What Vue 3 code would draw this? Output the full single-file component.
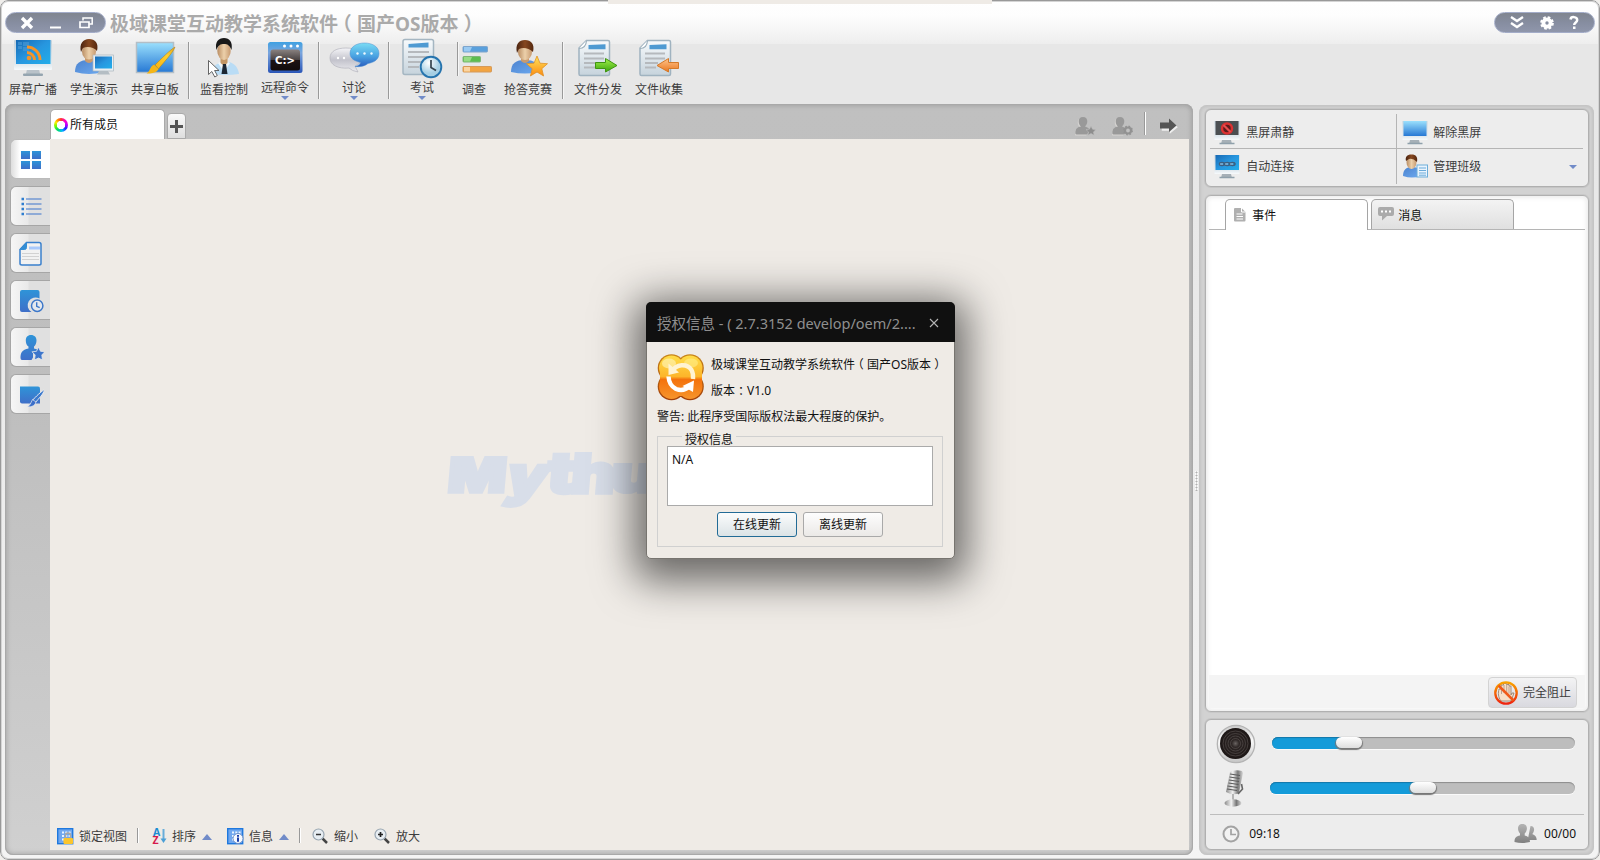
<script setup>
const tools = [
  { id: 'broadcast', label: '屏幕广播' },
  { id: 'student', label: '学生演示' },
  { id: 'board', label: '共享白板' },
  { sep: true },
  { id: 'control', label: '监看控制' },
  { id: 'command', label: '远程命令', more: true },
  { sep: true },
  { id: 'discuss', label: '讨论', more: true },
  { sep: true },
  { id: 'exam', label: '考试', more: true },
  { sep: true, short: true },
  { id: 'survey', label: '调查' },
  { id: 'quiz', label: '抢答竞赛' },
  { sep: true },
  { id: 'send', label: '文件分发' },
  { id: 'collect', label: '文件收集' },
]
const views = ['grid', 'list', 'report', 'history', 'group', 'draw']
const sliders = [
  { id: 'speaker', value: 25.4 },
  { id: 'mic', value: 50.2 },
]
</script>

<template>
  <svg class="defs" aria-hidden="true">
    <defs>
      <linearGradient id="screen" x1="0" y1="0" x2="1" y2="1"><stop offset="0" stop-color="#1769b4" /><stop offset=".5" stop-color="#2796df" /><stop offset="1" stop-color="#22aeea" /></linearGradient>
      <linearGradient id="sky" x1="0" y1="0" x2="0" y2="1"><stop offset="0" stop-color="#9be0fd" /><stop offset="1" stop-color="#2678d4" /></linearGradient>
      <linearGradient id="metal" x1="0" y1="0" x2="0" y2="1"><stop offset="0" stop-color="#c3d2dc" /><stop offset=".8" stop-color="#dfe8ee" /><stop offset="1" stop-color="#f7fafc" /></linearGradient>
      <linearGradient id="blue" x1="0" y1="0" x2="0" y2="1"><stop offset="0" stop-color="#2f94d8" /><stop offset="1" stop-color="#3f6fc8" /></linearGradient>
      <linearGradient id="cloth" x1="0" y1="0" x2="1" y2="1"><stop offset="0" stop-color="#4c83cf" /><stop offset="1" stop-color="#6daaf0" /></linearGradient>
      <linearGradient id="skin" x1="0" y1="0" x2="1" y2="0"><stop offset="0" stop-color="#b98d63" /><stop offset=".5" stop-color="#ecd0aa" /><stop offset="1" stop-color="#c79a70" /></linearGradient>
      <linearGradient id="hair" x1="0" y1="0" x2="1" y2="0"><stop offset="0" stop-color="#4a2310" /><stop offset=".5" stop-color="#86471f" /><stop offset="1" stop-color="#54280f" /></linearGradient>
      <linearGradient id="paper" x1="0" y1="0" x2="0" y2="1"><stop offset="0" stop-color="#f7fafc" /><stop offset="1" stop-color="#c6d3dc" /></linearGradient>
      <linearGradient id="gold" x1="0" y1="0" x2="0" y2="1"><stop offset="0" stop-color="#ffe45a" /><stop offset="1" stop-color="#fb8b12" /></linearGradient>
      <linearGradient id="brush" x1="0" y1="1" x2="1" y2="0"><stop offset="0" stop-color="#f6b00f" /><stop offset=".6" stop-color="#ffd02e" /><stop offset="1" stop-color="#e2a41b" /></linearGradient>
      <linearGradient id="greenArrow" x1="0" y1="0" x2="0" y2="1"><stop offset="0" stop-color="#a2f04c" /><stop offset="1" stop-color="#3da60d" /></linearGradient>
      <linearGradient id="orangeArrow" x1="0" y1="0" x2="0" y2="1"><stop offset="0" stop-color="#ffc48b" /><stop offset="1" stop-color="#e9771f" /></linearGradient>
      <linearGradient id="bubble" x1="0" y1="0" x2="0" y2="1"><stop offset="0" stop-color="#7adcf4" /><stop offset=".55" stop-color="#4aa3e2" /><stop offset="1" stop-color="#2a5fc0" /></linearGradient>
      <linearGradient id="bubbleGrey" x1="0" y1="0" x2="0" y2="1"><stop offset="0" stop-color="#f4f4f7" /><stop offset=".5" stop-color="#c3c3cc" /><stop offset="1" stop-color="#ececf0" /></linearGradient>
      <linearGradient id="prompt" x1="0" y1="0" x2="0" y2="1"><stop offset="0" stop-color="#8a8280" /><stop offset=".48" stop-color="#4a4444" /><stop offset=".5" stop-color="#1c1415" /><stop offset="1" stop-color="#120c0d" /></linearGradient>
      <linearGradient id="frame" x1="0" y1="0" x2="0" y2="1"><stop offset="0" stop-color="#3fa0e2" /><stop offset=".35" stop-color="#7ba5dd" /><stop offset="1" stop-color="#2a56b8" /></linearGradient>
      <linearGradient id="logo" gradientUnits="userSpaceOnUse" x1="0" y1="0" x2="0" y2="48"><stop offset="0" stop-color="#ffe04a" /><stop offset=".47" stop-color="#fdb52a" /><stop offset=".53" stop-color="#f4720c" /><stop offset="1" stop-color="#f79a30" /></linearGradient>
      <linearGradient id="rim" gradientUnits="userSpaceOnUse" x1="0" y1="0" x2="0" y2="48"><stop offset="0" stop-color="#c9861a" /><stop offset="1" stop-color="#a03c08" /></linearGradient>
      <linearGradient id="ban" x1="0" y1="0" x2="0" y2="1"><stop offset="0" stop-color="#f9a400" /><stop offset="1" stop-color="#ee2410" /></linearGradient>
      <linearGradient id="people" x1="0" y1="0" x2="0" y2="1"><stop offset="0" stop-color="#b4b4b4" /><stop offset="1" stop-color="#808080" /></linearGradient>
      <linearGradient id="chrome" x1="0" y1="0" x2="1" y2="0"><stop offset="0" stop-color="#8b8b8b" /><stop offset=".4" stop-color="#f2f2f2" /><stop offset=".7" stop-color="#777" /><stop offset="1" stop-color="#d8d8d8" /></linearGradient>
      <radialGradient id="cone"><stop offset="0" stop-color="#6a6462" /><stop offset=".25" stop-color="#2d2625" /><stop offset="1" stop-color="#1d1716" /></radialGradient>
      <linearGradient id="ring" x1="0" y1="0" x2="0" y2="1"><stop offset="0" stop-color="#c9c9c9" /><stop offset=".4" stop-color="#fafafa" /><stop offset="1" stop-color="#c4c4c4" /></linearGradient>
      <radialGradient id="dial" cx=".4" cy=".3"><stop offset="0" stop-color="#ffffff" /><stop offset="1" stop-color="#a6cfe4" /></radialGradient>
    </defs>

    <symbol id="broadcast" viewBox="0 0 56 42">
      <path d="M22 31h12l1 5h-14z" fill="#b9c2c9" /><rect x="18" y="35.5" width="20" height="2.5" rx="1" fill="#95a5b0" />
      <rect x="9" y="2" width="38" height="30" rx="1" fill="url(#metal)" /><rect x="11" y="2" width="34.500" height="24" fill="url(#screen)" />
      <path d="M13 4h4v3h-4zM18 4h6v4h-6zM13 8h4v3h-4zM18 9h6v4h-6z" fill="#4d9bd6" opacity=".6" />
      <circle cx="24" cy="20" r="2.300" fill="#f59428" /><path d="M22 14.500a7.500 7.500 0 0 1 7.500 7.500M22 9a13 13 0 0 1 13 13" fill="none" stroke="#f59428" stroke-width="3" />
    </symbol>
    <symbol id="student" viewBox="0 0 56 42">
      <path d="M9 34c0-9 5-12 14-12s13 3 14 12q-14 4-28 0z" fill="url(#cloth)" /><path d="M19 18h8v5q-4 4-8 0z" fill="#c99b6f" />
      <ellipse cx="23" cy="13.500" rx="7" ry="8" fill="url(#skin)" /><path d="M15 14c-2-8 2-13 8-13s10 4 8 12c-3-4-10-5-14-3z" fill="url(#hair)" />
      <rect x="27" y="17" width="20.500" height="16" fill="#e9eef1" stroke="#aab6bd" stroke-width=".7" /><rect x="29" y="18.500" width="17" height="12" fill="url(#screen)" /><path d="M33 33h9l2 3.500h-13z" fill="#b4bdc3" />
    </symbol>
    <symbol id="board" viewBox="0 0 56 42">
      <rect x="9.500" y="4.500" width="37" height="30" fill="url(#sky)" stroke="#b3bec6" stroke-width="1.500" />
      <path d="M48 9c-4 2-15 13-20 18l3.500 4C36 25 46 15 48 9z" fill="url(#brush)" stroke="#ad7e12" stroke-width=".5" /><path d="M27 26.500l4.500 4.500c-2 4-8 5-12 4.500 4-2 3-7 7.500-9z" fill="#f4b517" />
    </symbol>
    <symbol id="control" viewBox="0 0 56 42">
      <path d="M16 36c0-8 4-11 12-12s14 4 15 12q-14 2-27 0z" fill="#b9dcf5" /><path d="M22 25l6 9 6-9-6-3z" fill="#eef6fc" /><path d="M24.500 19h7v6l-3.500 3-3.500-3z" fill="#c39766" />
      <path d="M27 26h3l1.500 10h-6z" fill="#1b2734" /><ellipse cx="28" cy="13" rx="6.700" ry="9" fill="url(#skin)" /><path d="M20.500 12c-2-8 2-12 7.500-12s9 4 7.500 12c-2-5-4-6-7.500-6s-6 1-7.500 6z" fill="#191919" />
      <path d="M12.500 22.500v14l3.300-3 3 5.500 2.500-1.500-2.700-5h4.400z" fill="#fff" stroke="#555" stroke-width=".9" />
    </symbol>
    <symbol id="command" viewBox="0 0 56 42">
      <rect x="11" y="4" width="34.500" height="31" rx="2.500" fill="url(#frame)" /><rect x="13.500" y="11.500" width="29.500" height="21" rx="2.500" fill="url(#prompt)" />
      <circle cx="27.500" cy="8" r="1.500" fill="#fff" /><circle cx="34" cy="8" r="1.500" fill="#fff" /><circle cx="40.500" cy="8" r="1.500" fill="#fff" />
      <text x="18" y="25.500" font-family="DejaVu Sans" font-size="10" font-weight="bold" fill="#fff" textLength="20" lengthAdjust="spacingAndGlyphs">C:&gt;</text>
    </symbol>
    <symbol id="discuss" viewBox="0 0 56 42">
      <path d="M20 10c10 0 16 4 16 10 0 3-3 6-7 8l3 6q-6-1-9-4C12 31 4 27 4 20S11 10 20 10z" fill="url(#bubbleGrey)" stroke="#b3b3bc" stroke-width=".7" />
      <g fill="#fff"><circle cx="12" cy="20" r="1.200" /><circle cx="18" cy="20" r="1.200" /></g>
      <path d="M38.500 5C46 5 53 8.500 53 15.500c0 6-5 9-11 10q-5 4-13 3 5-1 5.500-4C28 23 24 20 24 15.500 24 8.500 31 5 38.500 5z" fill="url(#bubble)" stroke="#4b8ed0" stroke-width=".5" />
      <g fill="#eef9ff"><circle cx="31.500" cy="15.500" r="1.200" /><circle cx="38.500" cy="15.500" r="1.200" /><circle cx="45.500" cy="15.500" r="1.200" /></g>
    </symbol>
    <symbol id="exam" viewBox="0 0 56 42">
      <rect x="9" y="1.500" width="30.500" height="35" rx="2" fill="url(#paper)" stroke="#a5b6c2" stroke-width="1.500" /><path d="M14.500 6l20-1.500v5h-20z" fill="#4e9ad2" />
      <path d="M14 14h21M14 19h21M14 24h14M14 29h11" stroke="#b5b9bd" stroke-width="1.800" /><circle cx="37" cy="29" r="10.300" fill="url(#dial)" stroke="#2674ae" stroke-width="1.900" /><path d="M37 22v7.500l5 3" fill="none" stroke="#34434e" stroke-width="1.700" />
    </symbol>
    <symbol id="survey" viewBox="0 0 56 42">
      <rect x="17" y="8.500" width="24.500" height="5.500" rx=".8" fill="#5aa0dc" stroke="#7fa5cc" /><path d="M18 9h8l-2 4.500h-6z" fill="#9acaf2" />
      <rect x="17" y="18.500" width="17.500" height="5.500" rx=".8" fill="#5cbd4e" stroke="#7fb578" /><path d="M18 19h8l-2 4.500h-6z" fill="#97dc85" />
      <rect x="17" y="28.500" width="28.500" height="5.500" rx=".8" fill="#f2a441" stroke="#d59a5a" /><path d="M18 29h6v4.500h-6z" fill="#fbd4a0" />
    </symbol>
    <symbol id="quiz" viewBox="0 0 56 42">
      <path d="M11 34c0-9 5-12 14-12s14 3 14 12q-14 3-28 0z" fill="url(#cloth)" /><path d="M21 18h8v5q-4 4-8 0z" fill="#c99b6f" /><ellipse cx="25" cy="14" rx="7" ry="8" fill="url(#skin)" /><path d="M17 15c-2-9 2-13 8-13s10 4 8 12c-4-4-10-5-14-3z" fill="url(#hair)" />
      <path d="M37 18l3 7.200 7.500.5-5.700 5 1.800 7.300-6.600-4-6.600 4 1.800-7.300-5.700-5 7.500-.5z" fill="url(#gold)" stroke="#e09227" stroke-width=".8" />
    </symbol>
    <symbol id="sheet" viewBox="0 0 56 42">
      <path d="M16.500 2.500h21.500q1.500 0 1.500 1.500v32q0 1.500-1.500 1.500h-27.500q-1.500 0-1.500-1.500v-26z" fill="url(#paper)" stroke="#a0b3c0" stroke-width="1.500" /><path d="M9 10.500q7 0 7.500-8" fill="#fff" stroke="#9cafbc" stroke-width="1.200" />
      <path d="M18.500 7l17-.8v5h-17z" fill="#4e9ad2" /><path d="M14 15.500h20M14 20.500h20M14 25h13M14 29.500h11" stroke="#b5b9bd" stroke-width="1.800" />
    </symbol>
    <symbol id="send" viewBox="0 0 56 42"><use href="#sheet" width="56" height="42" /><path d="M25.500 24.500h10v-4l11.500 7-11.500 6.500v-3.500h-10z" fill="url(#greenArrow)" stroke="#3f9512" stroke-width="1" /></symbol>
    <symbol id="collect" viewBox="0 0 56 42"><use href="#sheet" width="56" height="42" /><path d="M47.500 24.500h-10v-4l-11.500 7 11.500 6.500v-3.500h10z" fill="url(#orangeArrow)" stroke="#d47929" stroke-width="1" /></symbol>

    <symbol id="grid" viewBox="0 0 26 26"><path d="M3 4h9v8H3zM14 4h9v8h-9z" fill="url(#blue)" /><path d="M3 14h9v8H3zM14 14h9v8h-9z" fill="url(#blue)" /></symbol>
    <symbol id="list" viewBox="0 0 26 26"><path d="M3.500 5h2.500M3.500 10h2.500M3.500 15h2.500M3.500 20h2.500" stroke="#2f7ed0" stroke-width="2.400" /><path d="M8 5h15.500M8 10h15.500M8 15h15.500M8 20h15.500" stroke="#3c74cc" stroke-width="1.200" /></symbol>
    <symbol id="report" viewBox="0 0 26 26"><path d="M8.500 1.500h12.500q2 0 2 2v19q0 1.500-2 1.500H4q-2 0-2-1.500V8.500z" fill="#f2f2f2" stroke="#3a80cd" stroke-width="1.500" /><path d="M2 8.500l6.500-7v5q0 2-2 2z" fill="#338dd4" stroke="#338dd4" /><path d="M11 5.500h11v3H11z" fill="#a9c9fb" /><path d="M4 12.500h17M4 15.500h17M4 18.500h17" stroke="#d2d2d2" /></symbol>
    <symbol id="history" viewBox="0 0 26 26"><path d="M4 2h15.500q2 0 2 2v6.500a7.300 7.300 0 0 0-8 13.500H4q-2 0-2-2V4q0-2 2-2z" fill="url(#blue)" /><circle cx="19.200" cy="17.700" r="5.700" fill="#e4e8ee" stroke="#3c77c9" stroke-width="1.500" /><path d="M18.700 14.300v4l3 1.400" fill="none" stroke="#3c77c9" stroke-width="1.400" /></symbol>
    <symbol id="group" viewBox="0 0 26 26"><path d="M13 0c3.500 0 5.500 2.300 5.500 5.500 0 2.500-1 5-2.500 6v2q4 .5 6 3l-7 1v5l-1.500 2.500H4q-1.500 0-1.500-2c0-5 1.500-8.500 8-9.500v-2c-2-1-2.700-3.500-2.700-6C7.800 2.300 9.500 0 13 0z" fill="url(#blue)" /><path d="M20.500 12l2 4.300 4.300.5-3 3.200.6 5-3.900-2-4 2 .7-5-3.200-3.200 4.500-.5z" fill="#3c75cb" stroke="#e4e8ee" stroke-width=".8" /></symbol>
    <symbol id="draw" viewBox="0 0 26 26"><path d="M2 4.500h18q2 0 2 2v15H4q-2 0-2-2z" fill="url(#blue)" /><path d="M26.500 7.500c-2 1-10 8-12 11l3 2c3-4 8-8 9-13z" fill="#3b79cd" stroke="#e9ebef" /><path d="M14.500 17.500l3.500 2.500q-1 5-8.500 5 3-2 5-7.500z" fill="#3c6fc9" stroke="#e9ebef" stroke-width=".7" /></symbol>

    <symbol id="monitor" viewBox="0 0 26 26"><path d="M8 20h9l1 4H7z" fill="#a6b0b7" /><path d="M5.500 23.500h15" stroke="#8fa0ab" stroke-width="1.500" /><rect x=".5" y="1" width="25" height="19" rx=".5" fill="url(#metal)" /></symbol>
    <symbol id="black" viewBox="0 0 26 26"><use href="#monitor" width="26" height="26" /><rect x="1.500" y="1" width="23" height="14" fill="#4b4f52" /><circle cx="13" cy="8.500" r="5" fill="#5f1b1c" stroke="#db3232" stroke-width="2.500" /><path d="M9.500 5l7 7" stroke="#e84e4e" stroke-width="2.200" /></symbol>
    <symbol id="unblack" viewBox="0 0 26 26"><use href="#monitor" width="26" height="26" /><rect x="1.500" y="1" width="23" height="15" fill="url(#sky)" /></symbol>
    <symbol id="connect" viewBox="0 0 26 26"><use href="#monitor" width="26" height="26" /><rect x="1.500" y="1" width="23.500" height="15" fill="url(#screen)" /><g fill="none" stroke="#3e5f80" stroke-width="1.500"><ellipse cx="8" cy="10" rx="2.500" ry="1.500" /><ellipse cx="13.300" cy="10" rx="2.500" ry="1.500" /><ellipse cx="18.500" cy="10" rx="2.500" ry="1.500" /></g><path d="M6 10h15" stroke="#cfe0ec" stroke-width=".8" stroke-dasharray="3 2" /></symbol>
    <symbol id="class" viewBox="0 0 26 26"><path d="M1 22c0-6 3-9 9-9s9 3 9 9q-9 3-18 0z" fill="url(#cloth)" /><ellipse cx="9.500" cy="8" rx="5" ry="7" fill="url(#skin)" /><path d="M4 7C3 3 5 .5 9.500.5S16 3 15 8q-4-4-8-3z" fill="url(#hair)" /><rect x="15" y="11" width="10.500" height="12" fill="#eaf4fd" stroke="#6cadd9" /><path d="M17 14h7M17 16.500h7M17 19h7M17 21.200h7" stroke="#6babda" /></symbol>

    <symbol id="person" viewBox="0 0 22 20"><path d="M8 0c3 0 4.300 2 4.300 4.300S11.300 8.500 10 9.500q4 1 5 4l-3 4H1.500Q0 17.500.3 15C.6 11.500 3 10 6 9.500 4.500 8.500 3.700 6.600 3.700 4.300S5 0 8 0z" fill="#d5d3d1" transform="translate(-.9 .9)" /><path d="M8 0c3 0 4.300 2 4.300 4.300S11.300 8.500 10 9.500q4 1 5 4l-3 4H1.500Q0 17.500.3 15C.6 11.500 3 10 6 9.500 4.500 8.500 3.700 6.600 3.700 4.300S5 0 8 0z" fill="#999" /></symbol>
    <symbol id="lens" viewBox="0 0 17 17"><path d="M10.500 10.500l4.500 4.500" stroke="#444" stroke-width="2.500" /><circle cx="6.500" cy="6.500" r="5.500" fill="#e7edf2" stroke="#98a5b1" stroke-width="1.200" /></symbol>
    <symbol id="panel" viewBox="0 0 17 17"><rect x=".7" y=".7" width="15" height="15" fill="#70a7ef" stroke="#1e78de" stroke-width="1.400" /><path d="M5 4.500h9M5 8h9M5 11.500h9" stroke="#e8f3ff" stroke-width="2" stroke-dasharray="2 1.300" /></symbol>

    <symbol id="speaker" viewBox="0 0 42 40"><circle cx="20" cy="20" r="18.700" fill="url(#ring)" stroke="#b4b4b4" stroke-width="1.300" /><circle cx="19.500" cy="19.500" r="15.500" fill="url(#cone)" /><g fill="none" stroke="#5d5654" stroke-width=".6"><circle cx="19.500" cy="19.500" r="12.500" /><circle cx="19.500" cy="19.500" r="10" /><circle cx="19.500" cy="19.500" r="7.500" /><circle cx="19.500" cy="19.500" r="5" /></g></symbol>
    <symbol id="mic" viewBox="0 0 42 40"><path d="M15 3q5-3 12-1l1 2-4 20q-6 3-13-1z" fill="url(#chrome)" /><path d="M15 5l10 1.500M14.500 8l10 1.500M14 11l10 1.500M13.500 14l10 1.500M12.500 17l10 1.500M12 20l10 1.500" stroke="#5c5c5c" stroke-width="1.200" /><path d="M26.500 15l1 5-4.500 5" fill="none" stroke="#666" stroke-width="1.600" /><path d="M17 25v7h2v-7z" fill="#b5b5b5" /><ellipse cx="18" cy="34" rx="8.500" ry="3.700" fill="url(#chrome)" /></symbol>
  </svg>

  <div class="window">
    <div class="strip"></div>
    <header class="titlebar">
      <div class="capsule">
        <svg class="close" width="14" height="12" viewBox="0 0 14 12"><path d="M2 1l10 10M12 1L2 11" stroke="#fff" stroke-width="3.400" /></svg>
        <svg class="min" width="11" height="12" viewBox="0 0 11 12"><path d="M0 10.500h11" stroke="#fff" stroke-width="2.200" /></svg>
        <svg class="restore" width="14" height="12" viewBox="0 0 14 12"><path d="M4 3.500v-2.500h9.200v6h-3" fill="none" stroke="#fff" stroke-width="1.500" /><path d="M1 5h9v5.500H1z" fill="none" stroke="#fff" stroke-width="1.700" /></svg>
      </div>
      <h1>极域课堂互动教学系统软件<span class="paren">（</span>国产OS版本<span class="paren shut">）</span></h1>
      <div class="capsule right">
        <svg width="14" height="13" viewBox="0 0 14 13"><path d="M1 1l6 4 6-4M1 7l6 4 6-4" fill="none" stroke="#fff" stroke-width="2.300" /></svg>
        <svg width="14" height="14" viewBox="0 0 14 14"><circle cx="7" cy="7" r="3.600" fill="none" stroke="#fff" stroke-width="3.800" /><circle cx="7" cy="7" r="5.700" fill="none" stroke="#fff" stroke-width="2.300" stroke-dasharray="2.577 1.900" /></svg>
        <svg width="10" height="13" viewBox="0 0 10 13"><path d="M1.500 3.500C2 0 8.200.5 8.200 4c0 2.400-3 2.500-3 5" fill="none" stroke="#fff" stroke-width="2.500" /><path d="M4 10.500h2.500V13H4z" fill="#fff" /></svg>
      </div>
    </header>

    <nav class="toolbar">
      <template v-for="(t, i) in tools" :key="i">
        <i v-if="t.sep" class="sep" :class="{ short: t.short }"></i>
        <div v-else class="tool" :class="[t.id, { more: t.more }]">
          <svg width="56" height="42"><use :href="'#' + t.id" width="56" height="42" /></svg>
          <span>{{ t.label }}</span>
          <b v-if="t.more"></b>
        </div>
      </template>
    </nav>

    <div class="body">
      <main class="stage">
        <div class="tabs">
          <div class="tab"><i class="wheel"></i>所有成员</div>
          <div class="plus"><svg width="13" height="13" viewBox="0 0 13 13"><path d="M6.500 0v13M0 6.500h13" stroke="#555" stroke-width="3" /></svg></div>
          <div class="actions">
            <svg width="22" height="20"><use href="#person" width="22" height="20" /><path d="M16 9l1.600 3.200 3.400.4-2.500 2.300.7 3.400-3.200-1.700-3.200 1.700.7-3.400-2.500-2.300 3.400-.4z" fill="#8e8e8e" stroke="#c0c0c0" stroke-width=".6" /></svg>
            <svg width="22" height="20"><use href="#person" width="22" height="20" /><circle cx="16" cy="13.500" r="3" fill="#c0c0c0" stroke="#929292" stroke-width="2.200" /><circle cx="16" cy="13.500" r="4.300" fill="none" stroke="#929292" stroke-width="1.300" stroke-dasharray="1.690 1.690" /></svg>
            <i class="rule"></i>
            <svg width="18" height="16" viewBox="0 0 18 16"><path d="M1 5h8V1.500l8 7L9 15v-3H1z" fill="#eee" transform="translate(.8 .8)" /><path d="M0 4.500h9V.5l7.500 7L9 14v-3.500H0z" fill="#555" /></svg>
          </div>
        </div>
        <div class="work">
          <aside class="rail">
            <div v-for="(v, i) in views" :key="v" class="view" :class="{ on: i === 0 }"><svg width="26" height="26"><use :href="'#' + v" width="26" height="26" /></svg></div>
          </aside>
          <section class="canvas">
            <svg class="mark" width="200" height="80" viewBox="0 0 200 80">
              <g transform="translate(4.500 0) skewX(-5)" font-family="Inter" font-weight="900" fill="#d8dee9" stroke="#d8dee9" stroke-width="3.500">
                <text y="51.500" x="1" font-size="47" textLength="58" lengthAdjust="spacingAndGlyphs">M</text>
                <text y="54" x="60" font-size="54" font-style="italic" textLength="41" lengthAdjust="spacingAndGlyphs">y</text>
                <text y="51.500" x="100" font-size="57" textLength="27" lengthAdjust="spacingAndGlyphs">t</text>
                <text y="51.500" x="124" font-size="54" textLength="44" lengthAdjust="spacingAndGlyphs">h</text>
                <text y="51.500" x="164" font-size="50" textLength="46" lengthAdjust="spacingAndGlyphs">u</text>
              </g>
            </svg>
            <footer class="status">
              <div class="st lock"><svg width="17" height="17"><use href="#panel" width="17" height="17" /><path d="M8.500 11V7.500a2.500 2.500 0 0 1 5 0V11" fill="none" stroke="#a7a7a7" stroke-width="1.600" /><rect x="6.500" y="10" width="9.500" height="6" rx="1" fill="#fbc52c" /></svg>锁定视图</div>
              <i class="mini"></i>
              <div class="st sort"><svg width="15" height="17"><text x="1" y="7.500" font-family="Noto Sans" font-weight="bold" font-size="10.500" fill="#1c8bd2">A</text><text x="0.500" y="16" font-family="Noto Sans" font-weight="bold" font-size="10.500" fill="#d61a4c">Z</text><path d="M11.500 1v11" stroke="#68add9" stroke-width="2" /><path d="M8.500 10.500h6L11.500 15z" fill="#4b9fd6" /></svg>排序<b></b></div>
              <div class="st info"><svg width="17" height="17"><use href="#panel" width="17" height="17" /><circle cx="11" cy="10.500" r="5" fill="#f5f9ff" stroke="#6d8ec7" /><path d="M11 7v1.700M11 9.600v4.200" stroke="#1a3eaa" stroke-width="2" /></svg>信息<b></b></div>
              <i class="mini"></i>
              <div class="st out"><svg width="17" height="17"><use href="#lens" width="17" height="17" /><path d="M4 6.500h5" stroke="#333" stroke-width="1.500" /></svg>缩小</div>
              <div class="st in"><svg width="17" height="17"><use href="#lens" width="17" height="17" /><path d="M4 6.500h5M6.500 4v5" stroke="#222" stroke-width="1.700" /></svg>放大</div>
            </footer>
          </section>
        </div>
      </main>
      <div class="grip"></div>
      <aside class="side">
        <div class="box quick">
          <div class="q"><svg width="26" height="26"><use href="#black" width="26" height="26" /></svg>黑屏肃静</div>
          <div class="q"><svg width="26" height="26"><use href="#unblack" width="26" height="26" /></svg>解除黑屏</div>
          <div class="q"><svg width="26" height="26"><use href="#connect" width="26" height="26" /></svg>自动连接</div>
          <div class="q"><svg width="26" height="26"><use href="#class" width="26" height="26" /></svg>管理班级<b></b></div>
        </div>
        <div class="box feed">
          <div class="feedtabs">
            <div class="ft on"><svg width="12" height="14" viewBox="0 0 12 14"><path d="M1 0h6.500l4 4v8.500q0 1-1 1H1q-1 0-1-1V1q0-1 1-1z" fill="#b0b0b0" /><path d="M7.500 0v4h4M2.500 6h6M2.500 8.500h6.500M2.500 11h6.500" stroke="#fff" fill="none" /></svg>事件</div>
            <div class="ft"><svg width="16" height="14" viewBox="0 0 16 14"><path d="M2 0h12q2 0 2 2v5q0 2-2 2H9l-5 4.500V9H2Q0 9 0 7V2q0-2 2-2z" fill="#ababab" /><path d="M3 4.500h2M7 4.500h2M11 4.500h2" stroke="#fff" stroke-width="2" /></svg>消息</div>
          </div>
          <div class="events"></div>
          <div class="block">
            <button><svg width="24" height="24" viewBox="0 0 24 24"><path d="M7 20c-3-4-3-8-2-12h2V4h2.500V2.500h3V3.500h2.500V5h2v9l1-2h2l-3 8z" fill="#f7dfc8" stroke="#8e7766" stroke-width=".8" /><path d="M7.500 6v7M10 4v8M12.700 4v8M15 5.500v7" stroke="#a08a7b" stroke-width=".7" /><circle cx="12" cy="12" r="10.700" fill="none" stroke="url(#ban)" stroke-width="2.300" /><path d="M4.500 4.500l15 15" stroke="#f05a1a" stroke-width="2.500" /></svg>完全阻止</button>
          </div>
        </div>
        <div class="box sound">
          <div v-for="s in sliders" :key="s.id" class="row" :class="s.id">
            <svg width="42" height="40"><use :href="'#' + s.id" width="42" height="40" /></svg>
            <div class="track"><div class="fill" :style="{ width: s.value + '%' }"><i class="knob"></i></div></div>
          </div>
          <div class="info-row">
            <svg width="18" height="18" viewBox="0 0 18 18"><circle cx="9" cy="9" r="7.500" fill="#f2f2f2" stroke="#a3a3a3" stroke-width="2" /><path d="M9 4v5.500h5" fill="none" stroke="#a3a3a3" stroke-width="1.700" /></svg>
            <span>09:18</span>
            <svg class="folk" width="24" height="20" viewBox="0 0 24 20"><path d="M16.500 2c5 0 4 6 1.700 8 3 1 4.500 3 4.500 6h-9zM8.500 0c6 0 5 7 2.200 9.500v2q5.300 1 5.300 6.500-8 2-15.500 0c0-4 1.500-6 5.500-6.500v-2C3.500 7 2.500 0 8.500 0z" fill="url(#people)" /></svg>
            <span>00/00</span>
          </div>
        </div>
      </aside>
    </div>

    <div class="dialog">
      <div class="dtitle"><span>授权信息 - ( 2.7.3152 develop/oem/2....</span><svg width="10" height="10" viewBox="0 0 10 10"><path d="M1 1l8 8M9 1L1 9" stroke="#b5b5b5" stroke-width="1.100" /></svg></div>
      <div class="dbody">
        <div class="about">
          <svg width="48" height="48" viewBox="0 0 48 48">
            <g fill="url(#rim)"><circle cx="14.500" cy="14" r="13.800" /><circle cx="33" cy="14" r="13.800" /><circle cx="14.500" cy="32.500" r="13.800" /><circle cx="33" cy="32.500" r="13.800" /></g>
            <g fill="url(#logo)"><circle cx="14.500" cy="14" r="12.500" /><circle cx="33" cy="14" r="12.500" /><circle cx="14.500" cy="32.500" r="12.500" /><circle cx="33" cy="32.500" r="12.500" /><path d="M12 6h24v36H12z" /><path d="M3 13h42v22H3z" /></g>
            <ellipse cx="12" cy="9.500" rx="7" ry="5" fill="#fff6c0" opacity=".6" /><ellipse cx="34" cy="9" rx="7" ry="4.500" fill="#fff39a" opacity=".5" />
            <path d="M15 17.500C19 10 30 9 34.500 16q2 3.500 1.500 9" fill="none" stroke="#fff3d2" stroke-width="4.400" /><path d="M11.500 9.500v11.500l10.500-2.500z" fill="#fff3d2" />
            <path d="M11.500 22.500q.5 9 7.500 12.500 8 3 13.500-3" fill="none" stroke="#fff" stroke-width="4.400" /><path d="M37 26.500l-1 11.500-10.500-6z" fill="#fff" />
          </svg>
          <div class="names"><p>极域课堂互动教学系统软件<span class="paren">（</span>国产OS版本<span class="paren shut">）</span></p><p>版本<span class="colon">：</span>V1.0</p></div>
        </div>
        <p class="warn">警告: 此程序受国际版权法最大程度的保护。</p>
        <div class="group">
          <div class="legend">授权信息</div>
          <div class="text">N/A</div>
          <div class="buttons"><button class="primary">在线更新</button><button>离线更新</button></div>
        </div>
      </div>
    </div>
  </div>
</template>

<style>
body { background: #f0eeeb; overflow: hidden; }
</style>

<style scoped>
* { box-sizing: border-box; margin: 0; }
.defs { position: absolute; width: 0; height: 0; }
svg { display: block; flex: none; overflow: visible; }
.window { position: relative; width: 1600px; height: 860px; padding: 1px; border-radius: 8px; background: linear-gradient(#e7e7e7 100px, #e9e9e9 300px, #f4f4f4); overflow: hidden; font: 12px/16px "Noto Sans", "Noto Sans CJK SC", sans-serif; color: #3c3c3c; }
.window::after { content: ""; position: absolute; inset: 0; z-index: 2; border: 1px solid #999; border-radius: 8px; box-shadow: inset 0 0 0 1px #d4d4d4; pointer-events: none; }
.strip { position: absolute; z-index: 3; left: 608px; top: 0; width: 384px; height: 4px; background: #efebe6; }
.titlebar { height: 43px; padding: 11px 4px 0 4px; display: flex; background: linear-gradient(#fff, #fdfdfd 35%, #eee); }
.capsule { width: 101px; height: 21px; border-radius: 11px; border: 1px solid #a3acc8; background: linear-gradient(#80858f, #868da0 50%, #8f96ab); display: flex; align-items: center; }
.close { margin-left: 14px; }
.min { margin-left: 16px; }
.restore { margin-left: 18px; }
.capsule.right { margin-left: auto; padding: 0 15px 0 15px; justify-content: space-between; }
h1 { font-size: 19px; line-height: 28px; height: 28px; margin: -2px 0 0 4px; color: #aaa; white-space: nowrap; }
.paren { font-feature-settings: "halt" 1; margin: 0 .28em 0 .22em; }
.paren.shut { margin: 0 .22em 0 .28em; }
.colon { font-feature-settings: "halt" 1; margin: 0 .25em; }
.toolbar { height: 60px; display: grid; padding-left: 1px; margin-top: -6px; grid-template-columns: 62px 60px 62px 6px 64px 62px 2px 68px 2px 64px 8px 34px 64px 6px 64px 58px; justify-items: center; position: relative; }
.sep { width: 2px; height: 57px; margin-top: 4px; background: linear-gradient(90deg, #999 50%, #f6f6f6 50%); }
.sep.short { height: 34px; }
.tool { width: 60px; display: flex; flex-direction: column; align-items: center; white-space: nowrap; }
.tool span { margin-top: 2px; }
.tool.more span { margin-top: 0; }
.tool.survey { width: 24px; justify-self: start; }
.tool b { border: 4px solid transparent; border-top: 4px solid #718bc8; border-bottom: 0; }
.command { position: relative; left: -2px; }
.body { display: flex; height: 751px; margin: 6px 5px 0 4px; }
.stage { width: 1189px; border-radius: 8px; background: linear-gradient(#c0c0c0, #bebebe 40%, #d0d0d0); box-shadow: inset 0 0 0 1px #a9a9a9, inset 0 0 4px 2px rgba(130,130,130,.45); padding: 5px 4px 5px 5px; display: flex; flex-direction: column; }
.tabs { height: 30px; display: flex; padding-left: 40px; }
.tab { width: 115px; height: 30px; background: #fff; border: 1px solid #aaa; border-bottom: 0; border-radius: 5px 5px 0 0; display: flex; align-items: center; color: #111; padding: 0 0 0 3px; }
.wheel { width: 14px; height: 14px; border-radius: 50%; margin-right: 2px; background: radial-gradient(circle, #fff 4px, transparent 4.500px), conic-gradient(#f33, #f0c 12%, #b0f 25%, #22f 35%, #0bf 47%, #0d6 60%, #7f0 72%, #fe0 83%, #f80 92%, #f33); }
.plus { width: 19px; height: 26px; margin: 4px 0 0 2px; border: 1px solid #aaa; border-radius: 4px 4px 0 0; background: linear-gradient(#fafafa, #dedede); display: flex; align-items: center; justify-content: center; }
.actions { margin-left: auto; display: flex; padding-top: 8px; }
.actions svg { margin-right: 15px; }
.rule { width: 2px; height: 23px; background: linear-gradient(90deg, #999 50%, #fff 50%); margin: -5px 14px 0 -5px; }
.actions svg:last-child { margin: 1px 11px 0 0; }
.work { flex: 1; display: flex; min-height: 0; }
.rail { width: 40px; display: flex; flex-direction: column; gap: 7px; }
.view { height: 40px; border: 1px solid #a6a6a6; border-right: 0; border-radius: 6px 0 0 6px; background: linear-gradient(90deg, #f6f6f6, #e9e9e9 17px, #e0e0e0 18px); padding: 7px 0 0 7px; }
.view.on { background: linear-gradient(90deg, #ddd, #fff 9px); border-color: #bbb; }
.canvas { flex: 1; background: #efebe6; display: flex; flex-direction: column; justify-content: flex-end; position: relative; }
.mark { position: absolute; left: 396px; top: 302px; }
.status { display: flex; height: 27px; padding-left: 7px; align-items: center; }
.st { display: flex; align-items: center; height: 20px; }
.st svg { margin: -1px 5px 0 0; }
.st b { border: 5px solid transparent; border-bottom: 6px solid #718bc8; border-top: 0; margin-left: 6px; }
.mini { width: 2px; height: 15px; margin: -2px 0 0 10px; background: linear-gradient(90deg, #999 50%, #fff 50%); }
.sort { margin-left: 13px; }
.info { margin-left: 15px; }
.out { margin-left: 11px; }
.in { margin-left: 16px; }
.out svg, .in svg { margin-right: 5px; }
.grip { width: 6px; margin-top: 367px; height: 20px; padding: 0 1px 0 2px; background: radial-gradient(circle, #b0b0b0 .8px, #fafafa 1.200px) center 0 / 3px 3px content-box; }
.side { width: 395px; height: 750px; margin-top: 1px; border-radius: 8px; background: #d2d2d2; box-shadow: inset 0 0 3px 2px #c3c3c3; padding: 4px 5px 5px 6px; display: flex; flex-direction: column; }
.box { border: 1px solid #b0b0b0; border-radius: 6px; background: #ededed; box-shadow: 0 0 0 1px #c5c5c5; }
.quick { height: 78px; display: grid; grid-template-columns: 187px 186px; grid-template-rows: 35px 35px; padding: 4px 4px; }
.q { display: flex; align-items: center; padding: 1px 0 0 4px; }
.q:nth-child(odd) { border-right: 1px solid #b5b5b5; }
.q:nth-child(-n+2) { border-bottom: 1px solid #b5b5b5; padding-top: 3px; }
.q svg { margin-right: 6px; }
.q:nth-child(even) { padding-left: 5px; }
.q:nth-child(even) svg { margin-right: 5px; }
.q b { margin-left: auto; margin-right: 6px; border: 4px solid transparent; border-top-color: #718bc8; border-bottom: 0; }
.feed { height: 517px; margin-top: 8px; background: #fff; padding: 4px 3px 3px 3px; display: flex; flex-direction: column; box-shadow: 0 0 0 1px #c8c8c8, inset 0 0 4px 2px #ededed; }
.feedtabs { height: 31px; display: flex; gap: 3px; padding-left: 16px; border-bottom: 1px solid #b5b5b5; margin-top: -1px; }
.ft { width: 143px; height: 30px; border: 1px solid #a5a5a5; border-bottom: 0; border-radius: 5px 5px 0 0; display: flex; align-items: center; color: #111; background: linear-gradient(#f3f3f3, #e0e0e0); padding: 2px 0 0 6px; }
.ft svg { margin: -3px 4px 0 0; }
.ft.on { background: #fff; height: 31px; padding-left: 8px; }
.ft.on svg { margin-right: 6px; }
.events { flex: 1; }
.block { height: 33px; background: #f4f4f4; display: flex; justify-content: flex-end; padding: 2px 8px 0 0; }
button { font: inherit; color: #3c3c3c; padding: 0; }
.block button { width: 89px; height: 31px; border: 1px solid #d3d3d3; border-radius: 4px; background: linear-gradient(#f3f3f4, #d9d9df); display: flex; align-items: center; padding-left: 5px; gap: 5px; }
.sound { height: 131px; margin-top: 7px; padding: 4px; }
.row { display: flex; align-items: center; padding-left: 6px; }
.speaker.row { height: 38px; }
.speaker.row svg { margin-top: 2px; }
.track { width: 303px; height: 12px; border-radius: 6px; background: #bdbdbd; box-shadow: inset 0 1px 1px #8c8c8c, 0 1px 0 #fafafa; margin-left: auto; margin-right: 9px; }
.mic .track { width: 305px; }
.mic.row { height: 51px; margin-bottom: 1px; padding-left: 5px; }
.mic.row svg { margin-top: 3px; }
.fill { height: 12px; border-radius: 6px 0 0 6px; background: #149bd9; box-shadow: inset 0 1px 1px #1377a8; position: relative; }
.knob { position: absolute; right: -13px; top: 0; width: 26px; height: 11px; border-radius: 6px; background: linear-gradient(#fff, #dedede); box-shadow: 0 1px 1px 1px #777; }
.info-row { border-top: 1px solid #bdbdbd; display: flex; align-items: center; height: 38px; color: #111; padding: 0 8px 0 12px; }
.info-row span { margin-left: 9px; }
.info-row .folk { margin-left: auto; }
.info-row .folk + span { margin-left: 6px; }
.dialog { position: absolute; z-index: 5; left: 646px; top: 302px; width: 309px; height: 257px; border-radius: 5px; border: 1px solid #77746f; background: #efebe6; color: #111; box-shadow: 0 10px 40px 12px rgba(0,0,0,.56); }
.dtitle { height: 40px; margin: -1px -1px 0; border-radius: 5px 5px 0 0; background: #101010; color: #8f8f8f; font-size: 14.5px; display: flex; align-items: center; justify-content: space-between; padding: 1px 16px 0 11px; white-space: nowrap; }
.dbody { padding: 12px 11px 0 10px; }
.about { display: flex; height: 48px; gap: 6px; }
.names { padding-top: 3px; white-space: nowrap; }
.names p + p { margin-top: 10px; }
.warn { margin-top: 7px; }
.group { height: 111px; margin-top: 11px; border: 1px solid #d0d0d0; display: flex; flex-direction: column; align-items: center; }
.legend { align-self: flex-start; margin: -6px 0 0 24px; padding: 0 3px; height: 15px; line-height: 18px; background: #efebe6; }
.text { width: 266px; height: 60px; border: 1px solid #aaa; background: #fff; padding: 5px 4px; }
.buttons { display: flex; gap: 6px; margin-top: 6px; }
.buttons button { width: 80px; height: 25px; border: 1px solid #a9a9a9; border-radius: 3px; background: linear-gradient(#fdfdfd, #ebe9e7); color: #111; }
.buttons .primary { border-color: #226b96; background: linear-gradient(#fbfcfc, #dbe3e6); }
</style>
